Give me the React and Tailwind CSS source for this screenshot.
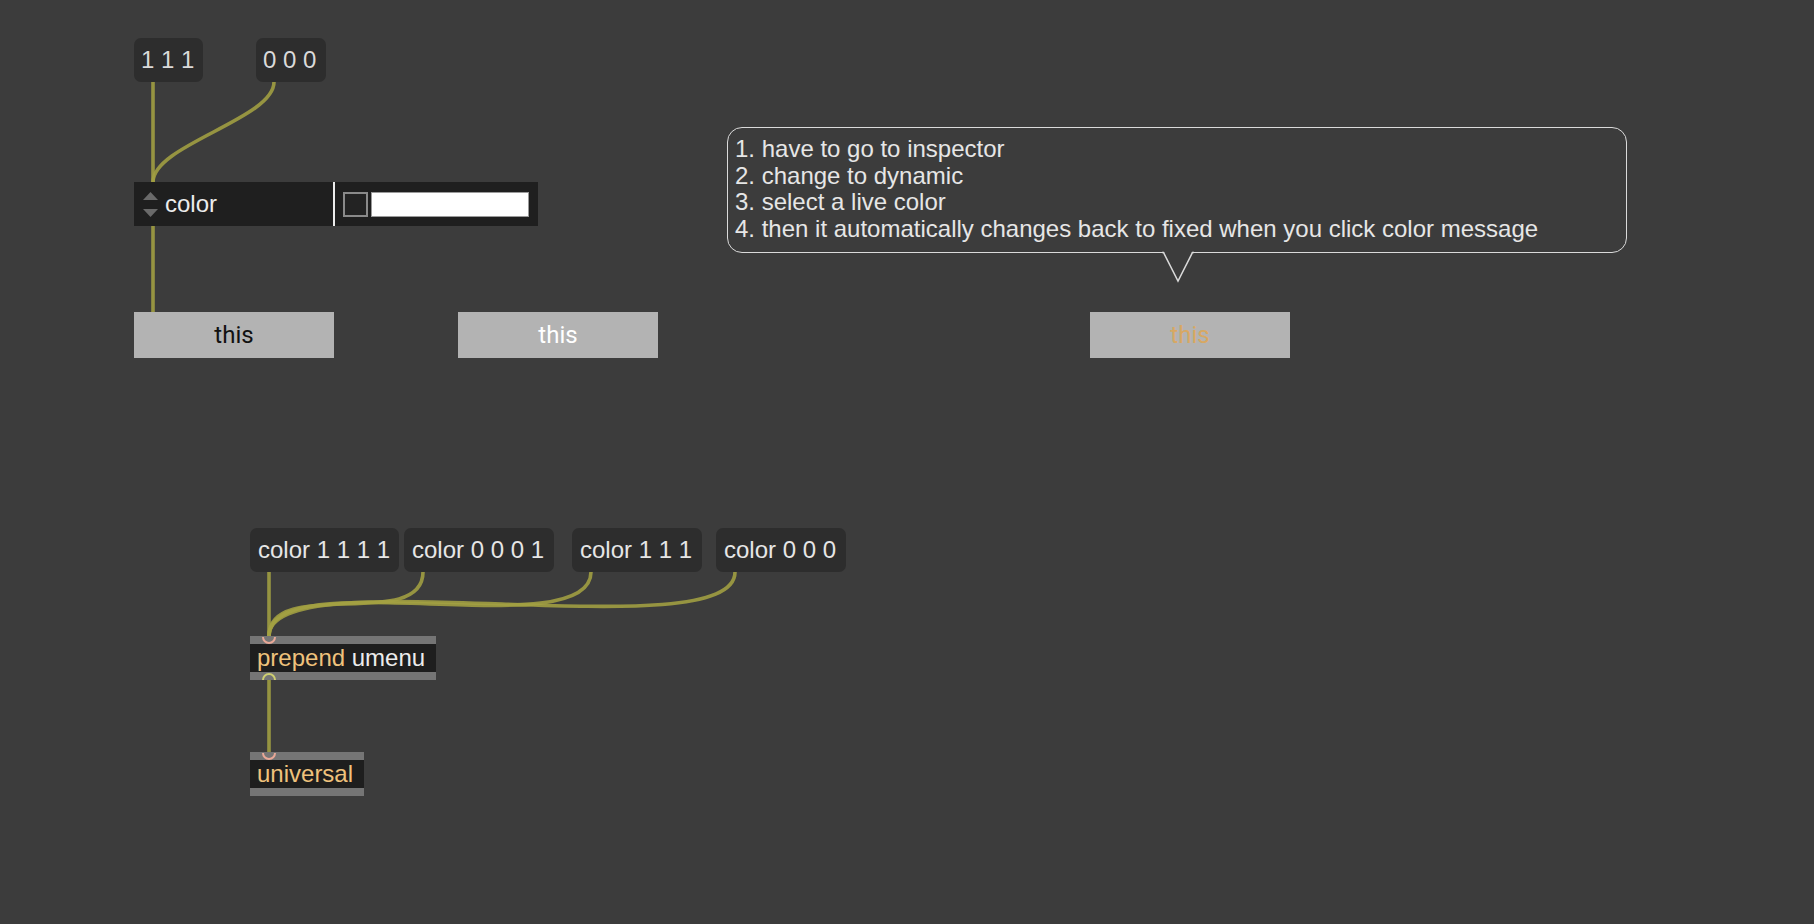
import React from "react";

const cordColor = "#a3a042";

function cubic(x1, y1, x2, y2, d) {
  return `M ${x1} ${y1} C ${x1} ${y1 + d}, ${x2} ${y2 - d}, ${x2} ${y2}`;
}

function Cords() {
  const paths = [
    `M 153 82 L 153 182`,
    cubic(274, 82, 153, 182, 37),
    `M 153 226 L 153 312`,
    `M 269 572 L 269 636`,
    cubic(423, 572, 269, 636, 60),
    cubic(591, 572, 269, 636, 75),
    cubic(735, 572, 269, 636, 80),
    `M 269 680 L 269 752`,
  ];
  return (
    <svg
      className="absolute left-0 top-0"
      width="1814"
      height="924"
      viewBox="0 0 1814 924"
    >
      {paths.map((d, i) => (
        <path
          key={i}
          d={d}
          fill="none"
          stroke={cordColor}
          strokeWidth="3.6"
          strokeOpacity="0.88"
          strokeLinecap="butt"
        />
      ))}
    </svg>
  );
}

function Ports() {
  return (
    <svg
      className="absolute left-0 top-0 pointer-events-none"
      width="1814"
      height="924"
      viewBox="0 0 1814 924"
    >
      <path d="M 263 637 A 6 6 0 0 0 275 637" fill="none" stroke="#e9a897" strokeWidth="2" />
      <path d="M 263 680 A 6 6 0 0 1 275 680" fill="none" stroke="#cfcf72" strokeWidth="2" />
      <path d="M 263 753 A 6 6 0 0 0 275 753" fill="none" stroke="#e9a897" strokeWidth="2" />
    </svg>
  );
}

const font = { fontFamily: '"Liberation Sans", Arial, sans-serif' };

export default function App() {
  return (
    <div
      className="relative w-[1814px] h-[924px] overflow-hidden bg-[#3c3c3c]"
      style={font}
    >
      <Cords />

      {/* message boxes top */}
      <div className="absolute left-[134px] top-[38px] w-[69px] h-[44px] rounded-[7px] bg-[#2d2d2d] flex items-center pl-[7px] text-[24px] text-[#dadada] whitespace-pre">
        1 1 1
      </div>
      <div className="absolute left-[256px] top-[38px] w-[70px] h-[44px] rounded-[7px] bg-[#2d2d2d] flex items-center pl-[7px] text-[24px] text-[#dadada] whitespace-pre">
        0 0 0
      </div>

      {/* umenu */}
      <div className="absolute left-[134px] top-[182px] w-[404px] h-[44px] bg-[#1f1f1f] flex items-center">
        <div className="w-[31px] h-full flex flex-col items-center justify-center gap-[9px] pl-[1px]">
          <svg width="15" height="8" viewBox="0 0 15 8">
            <polygon points="7.5,0 15,8 0,8" fill="#6a6a6a" />
          </svg>
          <svg width="15" height="8" viewBox="0 0 15 8">
            <polygon points="0,0 15,0 7.5,8" fill="#6a6a6a" />
          </svg>
        </div>
        <div className="w-[168px] text-[24px] text-[#ececec] leading-none">color</div>
        <div className="w-[2px] h-full bg-[#ececec]" />
        <div className="flex items-center ml-[8px] gap-[3px]">
          <div className="w-[25px] h-[25px] border-2 border-[#8a8a8a] bg-[#232323]" />
          <div className="w-[158px] h-[25px] border border-[#9a9a9a] bg-white" />
        </div>
      </div>

      {/* textbuttons */}
      <div
        className="absolute left-[134px] top-[312px] w-[200px] h-[46px] bg-[#b3b3b3] flex items-center justify-center text-[24px] text-[#111111]"
        style={{ fontFamily: "Roboto, sans-serif" }}
      >
        this
      </div>
      <div
        className="absolute left-[458px] top-[312px] w-[200px] h-[46px] bg-[#b3b3b3] flex items-center justify-center text-[24px] text-white"
        style={{ fontFamily: "Roboto, sans-serif" }}
      >
        this
      </div>
      <div
        className="absolute left-[1090px] top-[312px] w-[200px] h-[46px] bg-[#b3b3b3] flex items-center justify-center text-[24px] text-[#d8a862]"
        style={{ fontFamily: "Roboto, sans-serif" }}
      >
        this
      </div>

      {/* comment bubble */}
      <div className="absolute left-[727px] top-[127px] w-[900px] h-[126px] rounded-[15px] border-[1.5px] border-[#dadada] pl-[7px] pt-[8px] text-[24px] leading-[26.7px] text-[#e6e6e6]">
        <div>1. have to go to inspector</div>
        <div>2. change to dynamic</div>
        <div>3. select a live color</div>
        <div>4. then it automatically changes back to fixed when you click color message</div>
        <svg
          className="absolute left-[434px] top-[122px]"
          width="32"
          height="34"
          viewBox="0 0 32 34"
        >
          <polygon points="1,0 16,30 31,0" fill="#3c3c3c" />
          <polyline points="0,2.5 1.5,2.5 16,31 30.5,2.5 32,2.5" fill="none" stroke="#dadada" strokeWidth="1.5" />
        </svg>
      </div>

      {/* message boxes bottom */}
      <div className="absolute left-[250px] top-[528px] w-[149px] h-[44px] rounded-[7px] bg-[#2d2d2d] flex items-center pl-[8px] text-[24px] text-[#e6e6e6] whitespace-pre">
        color 1 1 1 1
      </div>
      <div className="absolute left-[404px] top-[528px] w-[150px] h-[44px] rounded-[7px] bg-[#2d2d2d] flex items-center pl-[8px] text-[24px] text-[#e6e6e6] whitespace-pre">
        color 0 0 0 1
      </div>
      <div className="absolute left-[572px] top-[528px] w-[130px] h-[44px] rounded-[7px] bg-[#2d2d2d] flex items-center pl-[8px] text-[24px] text-[#e6e6e6] whitespace-pre">
        color 1 1 1
      </div>
      <div className="absolute left-[716px] top-[528px] w-[130px] h-[44px] rounded-[7px] bg-[#2d2d2d] flex items-center pl-[8px] text-[24px] text-[#e6e6e6] whitespace-pre">
        color 0 0 0
      </div>

      {/* prepend umenu */}
      <div className="absolute left-[250px] top-[636px] w-[186px] h-[44px] flex flex-col">
        <div className="h-[8px] bg-[#757575]" />
        <div className="h-[28px] bg-[#1e1e1e] flex items-center pl-[7px] text-[24px] whitespace-pre leading-none">
          <span className="text-[#efc27c]">prepend</span>
          <span className="text-[#ececec]"> umenu</span>
        </div>
        <div className="h-[8px] bg-[#757575]" />
      </div>

      {/* universal */}
      <div className="absolute left-[250px] top-[752px] w-[114px] h-[44px] flex flex-col">
        <div className="h-[8px] bg-[#757575]" />
        <div className="h-[28px] bg-[#1e1e1e] flex items-center pl-[7px] text-[24px] leading-none">
          <span className="text-[#efc27c]">universal</span>
        </div>
        <div className="h-[8px] bg-[#757575]" />
      </div>

      <Ports />
    </div>
  );
}
